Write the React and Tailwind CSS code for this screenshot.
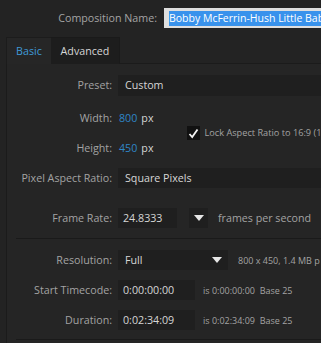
import React from "react";

const Label = ({ children }) => (
  <div className="w-[111px] shrink-0 text-right pr-[6px] text-[#a3a3a3]">{children}</div>
);

const Tri = () => (
  <svg width="10" height="6" viewBox="0 0 10 6" className="shrink-0">
    <path d="M0 0 H10 L5 6 Z" fill="#e6e6e6" />
  </svg>
);

export default function App() {
  return (
    <div
      className="w-[321px] h-[343px] overflow-hidden bg-[#232323] text-[10.7px] leading-none text-[#d6d6d6]"
      style={{ fontFamily: '"Open Sans", "Noto Sans", sans-serif' }}
    >
      {/* Composition name */}
      <div className="flex items-center pt-[8px] h-[28px]">
        <div className="w-[157px] shrink-0 text-right text-[#a3a3a3]">Composition Name:</div>
        <div className="ml-[7px] flex-1 min-w-0 h-[20px] bg-[#dedede] flex items-center pl-[5px] overflow-hidden whitespace-nowrap">
          <span className="bg-[#3892ec] text-white h-[15px] flex items-center pr-[2px] shrink-0 text-[10.5px]">Bobby McFerrin-Hush Little Baby</span>
        </div>
      </div>

      {/* Tabs */}
      <div className="flex mt-[9px] ml-[6px] h-[27px]">
        <div className="w-[45px] shrink-0 bg-[#262626] border-t border-l border-[#1c1c1c] flex items-center justify-center text-[#3f9ad8]">Basic</div>
        <div className="w-[69px] shrink-0 bg-[#1d1d1d] border-t border-r border-[#1a1a1a] flex items-center justify-center text-[#d6d6d6]">Advanced</div>
        <div className="flex-1 border-b border-[#1b1b1b]" />
      </div>

      {/* Panel */}
      <div className="ml-[6px] border-l border-[#1b1b1b] bg-[#252525] h-[300px] flex flex-col overflow-hidden">
        {/* Preset */}
        <div className="flex items-center mt-[11px] h-[21px]">
          <Label>Preset:</Label>
          <div className="flex-1 h-full bg-[#1f1f1f] flex items-center pl-[7px]">Custom</div>
        </div>

        {/* Width / Height + lock */}
        <div className="flex mt-[12px]">
          <div className="flex flex-col shrink-0">
            <div className="flex items-center h-[20px]">
              <Label>Width:</Label>
              <span className="text-[#2f86c8] ml-[1px]">800</span>
              <span className="ml-[4px]">px</span>
            </div>
            <div className="flex items-center h-[20px] mt-[10px]">
              <Label>Height:</Label>
              <span className="text-[#2f86c8] ml-[1px]">450</span>
              <span className="ml-[4px]">px</span>
            </div>
          </div>
          <div className="flex items-center ml-[34px] whitespace-nowrap">
            <div className="w-[13px] h-[14px] shrink-0 bg-[#111111] flex items-center justify-center">
              <svg width="11" height="11" viewBox="0 0 11 11">
                <path d="M1.5 6 L4.2 9 L9.5 1.5" fill="none" stroke="#f2f2f2" strokeWidth="1.8" />
              </svg>
            </div>
            <span className="ml-[4px] text-[9.2px] text-[#a3a3a3]">Lock Aspect Ratio to 16:9 (1</span>
          </div>
        </div>

        {/* PAR */}
        <div className="flex items-center mt-[10px] h-[20px]">
          <Label>Pixel Aspect Ratio:</Label>
          <div className="flex-1 h-full bg-[#1f1f1f] flex items-center pl-[7px]">Square Pixels</div>
        </div>

        {/* Frame rate */}
        <div className="flex items-center mt-[20px] h-[20px] whitespace-nowrap">
          <Label>Frame Rate:</Label>
          <div className="w-[59px] shrink-0 h-full bg-[#1f1f1f] flex items-center pl-[5px]">24.8333</div>
          <div className="ml-[12px] w-[19px] shrink-0 h-full bg-[#1f1f1f] flex items-center justify-center">
            <Tri />
          </div>
          <span className="ml-[10px] text-[#a3a3a3]">frames per second</span>
        </div>

        {/* separator */}
        <div className="mt-[10px] ml-[9px] h-[1px] shrink-0 bg-[#1a1a1a]" />

        {/* Resolution */}
        <div className="flex items-center mt-[11px] h-[20px] whitespace-nowrap">
          <Label>Resolution:</Label>
          <div className="w-[110px] shrink-0 h-full bg-[#1f1f1f] flex items-center justify-between pl-[7px] pr-[6px]">
            <span>Full</span>
            <Tri />
          </div>
          <span className="ml-[10px] text-[9px] text-[#a3a3a3]">800 x 450, 1.4 MB p</span>
        </div>

        {/* Start TC */}
        <div className="flex items-center mt-[10px] h-[20px] whitespace-nowrap">
          <Label>Start Timecode:</Label>
          <div className="w-[77px] shrink-0 h-full bg-[#1f1f1f] flex items-center pl-[5px]">0:00:00:00</div>
          <span className="ml-[8px] text-[9px] text-[#a3a3a3]">is 0:00:00:00&nbsp;&nbsp;Base 25</span>
        </div>

        {/* Duration */}
        <div className="flex items-center mt-[10px] h-[20px] whitespace-nowrap">
          <Label>Duration:</Label>
          <div className="w-[77px] shrink-0 h-full bg-[#1f1f1f] flex items-center pl-[5px]">0:02:34:09</div>
          <span className="ml-[8px] text-[9px] text-[#a3a3a3]">is 0:02:34:09&nbsp;&nbsp;Base 25</span>
        </div>

        <div className="mt-[9px] ml-[9px] h-[1px] shrink-0 bg-[#1a1a1a]" />
      </div>
    </div>
  );
}
